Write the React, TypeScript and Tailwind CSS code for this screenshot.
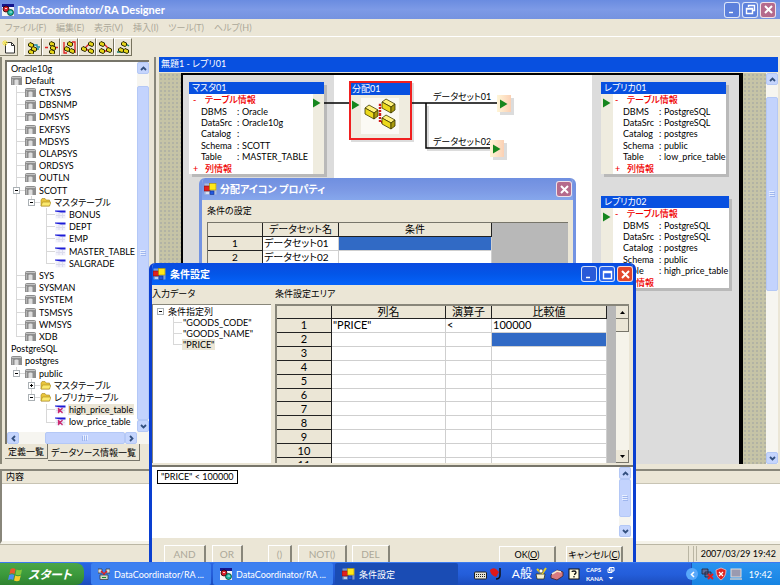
import React from 'react';
import clsx from 'clsx';

type IconName = 'db' | 'folder' | 'table' | 'replica';

interface TreeItem {
  level: number;
  label: string;
  icon?: IconName;
  // one entry per indent column: '|' line, ' ' blank, 'T' branch, 'L' last branch
  guides?: string;
  expander?: '+' | '-';
  selected?: boolean;
}

const treeItems: TreeItem[] = [
  { level: 0, label: 'Oracle10g' },
  { level: 1, label: 'Default', icon: 'db' },
  { level: 2, label: 'CTXSYS', icon: 'db', guides: 'T' },
  { level: 2, label: 'DBSNMP', icon: 'db', guides: 'T' },
  { level: 2, label: 'DMSYS', icon: 'db', guides: 'T' },
  { level: 2, label: 'EXFSYS', icon: 'db', guides: 'T' },
  { level: 2, label: 'MDSYS', icon: 'db', guides: 'T' },
  { level: 2, label: 'OLAPSYS', icon: 'db', guides: 'T' },
  { level: 2, label: 'ORDSYS', icon: 'db', guides: 'T' },
  { level: 2, label: 'OUTLN', icon: 'db', guides: 'T' },
  { level: 2, label: 'SCOTT', icon: 'db', guides: 'T', expander: '-' },
  { level: 3, label: 'マスタテーブル', icon: 'folder', guides: '|L', expander: '-' },
  { level: 4, label: 'BONUS', icon: 'table', guides: '| T' },
  { level: 4, label: 'DEPT', icon: 'table', guides: '| T' },
  { level: 4, label: 'EMP', icon: 'table', guides: '| T' },
  { level: 4, label: 'MASTER_TABLE', icon: 'table', guides: '| T' },
  { level: 4, label: 'SALGRADE', icon: 'table', guides: '| L' },
  { level: 2, label: 'SYS', icon: 'db', guides: 'T' },
  { level: 2, label: 'SYSMAN', icon: 'db', guides: 'T' },
  { level: 2, label: 'SYSTEM', icon: 'db', guides: 'T' },
  { level: 2, label: 'TSMSYS', icon: 'db', guides: 'T' },
  { level: 2, label: 'WMSYS', icon: 'db', guides: 'T' },
  { level: 2, label: 'XDB', icon: 'db', guides: 'L' },
  { level: 0, label: 'PostgreSQL' },
  { level: 1, label: 'postgres', icon: 'db' },
  { level: 2, label: 'public', icon: 'db', guides: 'L', expander: '-' },
  { level: 3, label: 'マスタテーブル', icon: 'folder', guides: ' T', expander: '+' },
  { level: 3, label: 'レプリカテーブル', icon: 'folder', guides: ' L', expander: '-' },
  { level: 4, label: 'high_price_table', icon: 'replica', guides: '  T', selected: true },
  { level: 4, label: 'low_price_table', icon: 'replica', guides: '  L' },
];

const menus = ['ファイル(F)', '編集(E)', '表示(V)', '挿入(I)', 'ツール(T)', 'ヘルプ(H)'];

const TreeIcon: React.FC<{ name: IconName }> = ({ name }) => {
  if (name === 'db') {
    return (
      <svg width="11" height="11" viewBox="0 0 11 11" className="shrink-0">
        <path d="M0 3Q0 1 2 1H9Q11 1 11 3V10H0Z" fill="#8e8e8e" />
        <path d="M1 2.5H10" stroke="#c4c4c4" />
        <path d="M3.5 10V5.5Q3.5 4.5 5.5 4.5T7.5 5.5V10Z" fill="#dedede" />
        <path d="M1.5 4V9.5" stroke="#b5b5b5" />
      </svg>
    );
  }
  if (name === 'folder') {
    return (
      <svg width="11" height="11" viewBox="0 0 11 11" className="shrink-0">
        <path d="M1 3L2 1.5H5L6 3H9.500V9H1Z" fill="#e9c53a" stroke="#a8871c" strokeWidth=".6" />
        <path d="M1 9L2.500 5H11L9.500 9Z" fill="#fbe96e" stroke="#a8871c" strokeWidth=".6" />
      </svg>
    );
  }
  return (
    <svg width="11" height="11" viewBox="0 0 11 11" className="shrink-0">
      <path d="M.5 2H10.500V9.500H.5Z" fill="#f0f0fa" />
      <path d="M4 4V9M7.500 4V9M1 6.500H10" stroke="#dcdcec" />
      <path d="M0 1.500H10.500V3.500H6L0 2.500Z" fill="#1c1cd8" />
      {name === 'replica' && <path d="M3 4L7.500 9M7.500 4L3 9M3.500 4V9" stroke="#cc2a70" strokeWidth="1.200" />}
    </svg>
  );
};

const Expander: React.FC<{ sign: '+' | '-' }> = ({ sign }) => (
  <svg width="7" height="7" viewBox="0 0 7 7" className="block bg-white">
    <rect x=".5" y=".5" width="6" height="6" fill="#fff" stroke="#aab0b4" />
    <path d={sign === '+' ? 'M2 3.5H5M3.5 2V5' : 'M2 3.5H5'} stroke="#000" />
  </svg>
);

const Guide: React.FC<{ kind: string; sign?: '+' | '-'; last: boolean }> = ({ kind, sign, last }) => (
  <span className={clsx('relative flex shrink-0 flex-col self-stretch', last ? 'w-[9px]' : 'w-[15px]')}>
    <span
      className={clsx('flex-1 border-[#d8d8d8]', kind !== ' ' && 'border-l', (kind === 'T' || kind === 'L') && 'border-b')}
    />
    <span className={clsx('flex-1 border-[#d8d8d8]', (kind === 'T' || kind === '|') && 'border-l')} />
    {sign && (
      <span className="absolute -left-[3px] top-[3px]">
        <Expander sign={sign} />
      </span>
    )}
  </span>
);

const TreeRow: React.FC<{ item: TreeItem }> = ({ item }) => {
  const guides = (item.guides ?? '').split('');
  return (
    <li className={clsx('flex flex-1 items-center', item.guides ? 'pl-[9px]' : 'pl-1')}>
      {guides.map((kind, i) => (
        <Guide
          key={i}
          kind={kind}
          last={i === guides.length - 1}
          sign={i === guides.length - 1 ? item.expander : undefined}
        />
      ))}
      {item.icon && <TreeIcon name={item.icon} />}
      <span className={clsx('whitespace-nowrap leading-[11px]', item.icon && 'ml-[2px] px-px', item.selected && 'bg-[#ebe6d6]')}>
        {item.label}
      </span>
    </li>
  );
};

const Chevron: React.FC<{ d: string }> = ({ d }) => (
  <svg width="7" height="7" viewBox="0 0 7 7">
    <path d={d} fill="none" stroke="#33507f" strokeWidth="1.800" />
  </svg>
);

const scrollButton =
  'flex h-3 w-3 shrink-0 items-center justify-center rounded-[2px] border border-[#b4c8f6] bg-[#c5d5fd]';

const ScrollBar: React.FC<{ className?: string; children: React.ReactNode }> = ({ className, children }) => (
  <div className={clsx('flex w-3 shrink-0 flex-col bg-[#f6f5f0]', className)}>
    <button aria-label="Scroll up" className={scrollButton}>
      <Chevron d="M1 5L3.500 2.500L6 5" />
    </button>
    {children}
    <button aria-label="Scroll down" className={scrollButton}>
      <Chevron d="M1 2L3.500 4.500L6 2" />
    </button>
  </div>
);

const Thumb: React.FC<{ className: string; sideways?: boolean }> = ({ className, sideways }) => (
  <div
    className={clsx(
      'flex items-center justify-center rounded-[2px] border border-[#b4c8f6] bg-[#c3d3fd]',
      className,
    )}
  >
    <svg width="6" height="6" viewBox="0 0 6 6" className={sideways ? 'rotate-90' : ''}>
      <path d="M0 .5H5M0 2.500H5M0 4.500H5" stroke="#e8efff" />
      <path d="M1 1.500H6M1 3.500H6M1 5.500H6" stroke="#9fb6ee" />
    </svg>
  </div>
);

const AppIcon: React.FC = () => (
  <svg width="12" height="12" viewBox="0 0 12 12" className="shrink-0">
    <rect width="12" height="12" fill="#f4f4f4" />
    <rect width="12" height="3" fill="#14148c" />
    <circle cx="4" cy="5" r="3" fill="#d8202c" stroke="#200" strokeWidth=".8" />
    <circle cx="8.500" cy="8.500" r="3" fill="#19b8a0" stroke="#032" strokeWidth=".8" />
    <path d="M3 4.500H5M7.500 8H10" stroke="#fff" strokeWidth=".8" />
  </svg>
);

const FormIcon: React.FC = () => (
  <svg width="13" height="12" viewBox="0 0 13 12" className="shrink-0">
    <rect x=".5" y=".5" width="12" height="11" fill="#e8e4d6" opacity=".5" />
    <rect x="0" y="3" width="6" height="5" fill="#e02020" stroke="#801010" strokeWidth=".6" />
    <rect x="5.500" y=".5" width="6.500" height="6.500" fill="#ffe818" stroke="#a58c00" strokeWidth=".6" />
    <rect x="6" y="8" width="4" height="3.500" fill="#2058e0" stroke="#10308c" strokeWidth=".6" />
    <path d="M2 10H5" stroke="#fff" />
  </svg>
);

type WindowButtonKind = 'min' | 'max' | 'restore' | 'close';

const glyphs: Record<WindowButtonKind, string> = {
  min: 'M3 9.500H7',
  max: 'M2.500 3.500H10.500V10.500H2.500ZM2.500 4.500H10.500',
  restore: 'M4.500 4V2.500H10.500V7.500H9M2.500 5.500H8.500V10.500H2.500ZM2.500 6H8.500',
  close: 'M3 3L10 10M10 3L3 10',
};

const WindowButton: React.FC<{ kind: WindowButtonKind; className: string }> = ({ kind, className }) => (
  <button
    aria-label={kind}
    className={clsx('flex items-center justify-center rounded-[3px] border border-white/80', className)}
  >
    <svg width="13" height="13" viewBox="0 0 13 13">
      <path d={glyphs[kind]} fill="none" stroke="#fff" strokeWidth={kind === 'close' ? 2 : 1.4} />
    </svg>
  </button>
);

// yellow boxes joined by coloured links; each tool joins them differently
const toolGlyphs = [
  { boxes: [[1, 1], [1, 8], [4, 5]], link: 'M6 4H10V6H13M8 8H12', tint: '#1a8ca0' },
  { boxes: [[4, 0], [5, 4], [4, 8]], link: 'M0 6.500H3M10 6.500H13', tint: '#e02020' },
  { boxes: [[4, 0], [1, 5], [6, 7]], link: 'M1 1V12H4M9 1H12V12', tint: '#e02020' },
  { boxes: [[0, 5], [7, 0], [7, 7]], link: 'M4 7L8 3M4 7L8 10', tint: '#e02020' },
  { boxes: [[0, 0], [0, 7], [7, 6]], link: 'M5 3L9 7M5 10H9', tint: '#e02020' },
  { boxes: [[4, 0], [1, 6], [6, 7]], link: 'M0 11H12M9 3L12 5', tint: '#14806c' },
];

const Toolbar: React.FC = () => (
  <div className="flex h-[21px] items-center border-t border-white bg-[#ebe6d6]">
    <button aria-label="New" className="flex h-[18px] w-[18px] items-center justify-center border-b border-r border-[#8a8672]">
      <svg width="14" height="14" viewBox="0 0 14 14">
        <path d="M3.500 2.500H9.500L12.500 5.500V13H3.500Z" fill="#fff" stroke="#333" />
        <path d="M9.500 2.500V5.500H12.500" fill="none" stroke="#333" />
        <path d="M3 0V6M0 3H6M1 1L5 5M5 1L1 5" stroke="#f3e24a" />
      </svg>
    </button>
    <div className="ml-[6px] flex">
      {toolGlyphs.map((tool, i) => (
        <button
          key={i}
          aria-label={`Tool ${i + 1}`}
          className="flex h-[18px] w-[18px] items-center justify-center border border-b-[#77735f] border-l-white border-r-[#77735f] border-t-white"
        >
          <svg width="13" height="13" viewBox="0 0 13 13">
            <path d={tool.link} fill="none" stroke={tool.tint} strokeWidth="1.300" />
            {tool.boxes.map(([x, y]) => (
              <path
                key={`${x}-${y}`}
                transform={`translate(${x} ${y})`}
                d="M.5 2L2 .5L5.500 2V4.500L4 5.500L.5 4Z"
                fill="#e6d619"
                stroke="#2a2700"
              />
            ))}
          </svg>
        </button>
      ))}
    </div>
  </div>
);

const PlayMark: React.FC = () => (
  <svg width="8" height="10" viewBox="0 0 8 10" className="shrink-0">
    <path d="M0 .5L7.500 5L0 9.500Z" fill="#16861d" />
  </svg>
);

interface TableCardProps {
  title: string;
  rows: [string, string][];
  port: 'left' | 'right';
  className: string;
}

const TableCard: React.FC<TableCardProps> = ({ title, rows, port, className }) => {
  const strip = (
    <div className={clsx('shrink-0 bg-[#efecdf] pt-[4px]', port === 'left' ? 'w-3 pl-[2px]' : 'w-[11px]')}>
      <PlayMark />
    </div>
  );
  return (
    <section className={clsx('flex h-[92px] flex-col bg-white shadow-[3px_3px_0_#b9b9b9]', className)}>
      <h2 className="h-3 bg-[#0850e0] pl-[3px] leading-3 text-white">{title}</h2>
      <div className="flex min-h-0 flex-1">
        {port === 'left' && strip}
        <div className={clsx('flex flex-1 flex-col whitespace-nowrap leading-[11px]', port === 'left' ? 'pl-[2px]' : 'pl-1')}>
          <div className="flex flex-1 items-center font-medium text-[#f00000]">
            <span className="w-3">-</span>テーブル情報
          </div>
          {rows.map(([name, value]) => (
            <div key={name} className="flex flex-1 items-center pl-2">
              <span className="w-[36px]">{name}</span>
              <span className="w-[5px]">:</span>
              {value}
            </div>
          ))}
          <div className="flex flex-1 items-center font-medium text-[#f00000]">
            <span className="w-3">+</span>列情報
          </div>
        </div>
        {port === 'right' && strip}
      </div>
    </section>
  );
};

const YellowBox: React.FC<{ x: number; y: number }> = ({ x, y }) => (
  <g transform={`translate(${x} ${y})`} stroke="#3c3800" strokeWidth=".8">
    <path d="M0 3L4 0L13 5L9 8Z" fill="#fff27a" />
    <path d="M0 3L9 8V14L0 9Z" fill="#ecd91c" />
    <path d="M9 8L13 5V11L9 14Z" fill="#a89a0c" />
  </g>
);

const replicaRows = (table: string): [string, string][] => [
  ['DBMS', 'PostgreSQL'],
  ['DataSrc', 'PostgreSQL'],
  ['Catalog', 'postgres'],
  ['Schema', 'public'],
  ['Table', table],
];

const OutputPort: React.FC<{ className: string }> = ({ className }) => (
  <div className={clsx('absolute flex h-[17px] w-[14px] items-center bg-gradient-to-r from-[#fff6d8] to-[#fbd0b4] pl-[3px] shadow-[3px_3px_0_#dcdcdc]', className)}>
    <PlayMark />
  </div>
);

const Canvas: React.FC = () => (
  <div className="relative ml-[22px] mr-[23px] flex flex-1 border-l-2 border-r-4 border-t-2 border-black bg-white">
    <div className="w-[151px] bg-[#dcdcdc] pl-[6px] pt-[7px]">
      <TableCard
        title="マスタ01"
        port="right"
        className="w-[135px]"
        rows={[
          ['DBMS', 'Oracle'],
          ['DataSrc', 'Oracle10g'],
          ['Catalog', ''],
          ['Schema', 'SCOTT'],
          ['Table', 'MASTER_TABLE'],
        ]}
      />
    </div>
    <div className="flex-1 pl-[15px] pt-[6px]">
      <section className="flex h-[59px] w-[63px] flex-col border-2 border-[#f02020] bg-[#efecdf] shadow-[2px_2px_0_#dcdcdc]">
        <h2 className="h-3 bg-[#0850e0] pl-px leading-3 text-white">分配01</h2>
        <div className="flex flex-1 pt-[3px]">
          <div className="pl-px pt-[2px]">
            <PlayMark />
          </div>
          <svg width="38" height="36" viewBox="0 0 38 36" className="ml-px bg-[#fbfaf4]">
            <path d="M15 16H19V7H24M19 16V24H24" fill="none" stroke="#d01818" strokeWidth="2.400" strokeDasharray="2 1" />
            <YellowBox x={4} y={7} />
            <YellowBox x={21} y={1} />
            <YellowBox x={21} y={17} />
          </svg>
        </div>
      </section>
    </div>
    <div className="flex w-[147px] flex-col gap-[22px] bg-[#dcdcdc] pl-[9px] pt-[7px]">
      <TableCard title="レプリカ01" port="left" className="w-[125px]" rows={replicaRows('low_price_table')} />
      <TableCard title="レプリカ02" port="left" className="w-[128px]" rows={replicaRows('high_price_table')} />
    </div>
    <svg className="pointer-events-none absolute left-0 top-0" width="330" height="90" viewBox="0 0 330 90">
      <path d="M245 31V75H310" fill="none" stroke="#dcdcdc" strokeWidth="2" />
      <path d="M141 28H166M229 28H315M243 28V73H307" fill="none" stroke="#000" strokeWidth="1.500" />
    </svg>
    <span className="absolute left-[250px] top-[16px] leading-3">データセット01</span>
    <span className="absolute left-[250px] top-[61px] leading-3">データセット02</span>
    <OutputPort className="left-[314px] top-[20px]" />
    <OutputPort className="left-[307px] top-[65px]" />
  </div>
);

const Explorer: React.FC = () => (
  <aside className="flex w-[150px] shrink-0 flex-col border-l-2 border-[#8a8878] bg-[#ebe6d6] pl-[3px] pr-px pt-[3px]">
    <div className="flex min-h-0 flex-1 flex-col border-l-2 border-t-2 border-[#77756a] bg-white">
      <div className="flex min-h-0 flex-1">
        <ul className="flex h-[366px] min-w-0 flex-1 flex-col overflow-hidden">
          {treeItems.map((item, i) => (
            <TreeRow key={i} item={item} />
          ))}
        </ul>
        <ScrollBar>
          <Thumb className="mt-3 flex-1" />
        </ScrollBar>
      </div>
      <div className="flex h-3 bg-[#f6f5f0] pr-3">
        <button aria-label="Scroll left" className={scrollButton}>
          <Chevron d="M5 1L2.500 3.500L5 6" />
        </button>
        <Thumb className="ml-[26px] flex-1" sideways />
        <button aria-label="Scroll right" className={scrollButton}>
          <Chevron d="M2 1L4.500 3.500L2 6" />
        </button>
      </div>
    </div>
    <div className="flex h-[20px] items-start whitespace-nowrap">
      <button className="h-[15px] border-b border-r border-[#77756a] px-[3px]">定義一覧</button>
      <button className="h-[17px] border-b border-r border-[#77756a] px-[3px]">データソース情報一覧</button>
    </div>
  </aside>
);

const headCell = 'border-b border-r border-[#222] bg-[#ebe6d6] p-0 text-center font-normal';
const bodyCell = 'border-b border-r border-[#cfcfcf] p-0 pl-px';

const PropertyDialog: React.FC = () => (
  <section className="absolute bottom-0 left-[199px] top-[178px] flex w-[377px] flex-col overflow-hidden rounded-t-[6px] border-x-[3px] border-[#7393e2] bg-[#ebe6d6]">
    <header className="flex h-[22px] shrink-0 items-center bg-gradient-to-b from-[#6f8fe0] via-[#7b98e4] to-[#86a7ec] pl-[2px] pr-px text-[10px] font-bold text-white">
      <FormIcon />
      <h2 className="ml-[3px] flex-1">分配アイコン プロパティ</h2>
      <WindowButton kind="close" className="h-4 w-4 bg-[#b56a8c]" />
    </header>
    <div className="px-[5px] pt-1">
      <p className="h-[18px]">条件の設定</p>
      <div className="flex border-l border-t border-[#77756a] bg-[#b8b8b8]">
        <table className="w-[284px] table-fixed border-separate border-spacing-0 bg-white text-[10px] leading-[13px]">
          <thead>
            <tr>
              <th className={clsx(headCell, 'w-[55px]')} />
              <th className={clsx(headCell, 'w-[76px]')}>データセット名</th>
              <th className={headCell}>条件</th>
            </tr>
          </thead>
          <tbody>
            {['データセット01', 'データセット02'].map((name, i) => (
              <tr key={name}>
                <th className={headCell}>{i + 1}</th>
                <td className={bodyCell}>{name}</td>
                <td className={clsx(bodyCell, i === 0 && 'bg-[#316ac5]')} />
              </tr>
            ))}
          </tbody>
        </table>
      </div>
    </div>
  </section>
);

const conditionRows = Array.from({ length: 11 }, (_, i) => (i === 0 ? ['"PRICE"', '<', '100000'] : ['', '', '']));

const ConditionTable: React.FC = () => (
  <div className="flex min-h-0 flex-1 overflow-hidden border-l-2 border-t-2 border-[#88867a] bg-[#b8b8b8]">
    <table className="h-[166px] w-[330px] table-fixed border-separate border-spacing-0 bg-white text-[11px] leading-[12px]">
      <thead>
        <tr>
          <th className={clsx(headCell, 'w-[55px]')} />
          <th className={headCell}>列名</th>
          <th className={clsx(headCell, 'w-[46px]')}>演算子</th>
          <th className={clsx(headCell, 'w-[115px]')}>比較値</th>
        </tr>
      </thead>
      <tbody>
        {conditionRows.map((cells, row) => (
          <tr key={row}>
            <th className={headCell}>{row + 1}</th>
            {cells.map((cell, col) => (
              <td key={col} className={clsx(bodyCell, row === 1 && col === 2 && 'bg-[#316ac5]')}>
                {cell}
              </td>
            ))}
          </tr>
        ))}
      </tbody>
    </table>
    <div className="ml-auto flex w-[13px] flex-col justify-between bg-[#f5f3ea]">
      <div>
        <button aria-label="Row up" className="flex h-[13px] w-[13px] items-center justify-center border-b border-r border-[#77756a] bg-[#ebe6d6]">
          <svg width="5" height="3" viewBox="0 0 5 3"><path d="M0 3L2.500 0L5 3Z" /></svg>
        </button>
        <div className="h-[13px] border-b border-r border-[#77756a] bg-[#ebe6d6]" />
      </div>
      <button aria-label="Row down" className="flex h-[13px] w-[13px] items-center justify-center border-b border-r border-[#77756a] bg-[#ebe6d6]">
        <svg width="5" height="3" viewBox="0 0 5 3"><path d="M0 0L2.500 3L5 0Z" /></svg>
      </button>
    </div>
  </div>
);

const dialogButton = 'border-l border-r-2 border-t border-l-white border-r-[#88867a] border-t-white text-center whitespace-nowrap';

const ConditionDialog: React.FC = () => (
  <section className="absolute bottom-0 left-[149px] top-[263px] flex w-[487px] flex-col overflow-hidden rounded-t-[6px] border-x-[3px] border-[#0a3fd0] bg-[#ebe6d6]">
    <header className="flex h-[22px] shrink-0 items-center gap-px bg-gradient-to-b from-[#0a4be0] via-[#0356e8] to-[#0563fa] pl-[1px] text-[10px] font-bold text-white">
      <FormIcon />
      <h2 className="ml-[3px] flex-1">条件設定</h2>
      <WindowButton kind="min" className="h-4 w-4 border-white/30 bg-[#2a5ad8]" />
      <WindowButton kind="max" className="ml-px h-4 w-4 bg-[#2a62e8]" />
      <WindowButton kind="close" className="ml-px h-4 w-4 bg-[#e2462c]" />
    </header>
    <div className="flex h-[178px] shrink-0 gap-1">
      <div className="flex w-[119px] flex-col">
        <p className="h-[19px] leading-[18px]">入力データ</p>
        <div className="flex-1 border-l border-t border-[#88867a] bg-white pl-1 pt-px">
          <div className="flex h-[11px] items-center gap-1 whitespace-nowrap">
            <Expander sign="-" />
            条件指定列
          </div>
          <ul className="ml-[16px]">
            {['"GOODS_CODE"', '"GOODS_NAME"', '"PRICE"'].map((name, i) => (
              <li key={name} className="flex h-[11px] items-center whitespace-nowrap">
                <Guide kind={i === 2 ? 'L' : 'T'} last />
                <span className={clsx('px-px leading-[11px]', i === 2 && 'bg-[#ebe6d6]')}>{name}</span>
              </li>
            ))}
          </ul>
        </div>
      </div>
      <div className="flex min-w-0 flex-1 flex-col pr-1">
        <p className="h-[19px] leading-[18px]">条件設定エリア</p>
        <ConditionTable />
      </div>
    </div>
    <div className="mt-[2px] flex h-[73px] shrink-0 border-b border-t-2 border-b-white border-t-[#77756a] bg-white">
      <div className="flex-1 pl-[5px] pt-[3px]">
        <span className="inline-block border border-black px-[3px] leading-3">"PRICE" &lt; 100000</span>
      </div>
      <ScrollBar className="mr-[2px]">
        <Thumb className="h-[38px]" />
        <div className="flex-1" />
      </ScrollBar>
    </div>
    <div className="flex min-h-0 flex-1 items-end pl-3 pr-[10px] text-[10px] leading-4">
      <div className="flex text-[#aca899]">
        <button className={clsx(dialogButton, 'w-[42px]')}>AND</button>
        <button className={clsx(dialogButton, 'ml-[6px] w-[31px]')}>OR</button>
        <button className={clsx(dialogButton, 'ml-[25px] w-[24px]')}>()</button>
        <button className={clsx(dialogButton, 'ml-[6px] w-[49px]')}>NOT()</button>
        <button className={clsx(dialogButton, 'ml-[5px] w-[38px]')}>DEL</button>
      </div>
      <div className="ml-auto flex gap-[10px] text-[9px] leading-[15px]">
        <button className={clsx(dialogButton, 'w-[57px]')}>OK(<u>O</u>)</button>
        <button className={clsx(dialogButton, 'w-[57px]')}>キャンセル(<u>C</u>)</button>
      </div>
    </div>
  </section>
);

const taskButton = 'flex h-full items-center gap-1 overflow-hidden whitespace-nowrap rounded-[2px] px-[7px] text-white';

const Taskbar: React.FC = () => (
  <footer className="flex h-[23px] shrink-0 items-center border-t border-[#3a7af0] bg-gradient-to-b from-[#2a66e2] via-[#245edb] to-[#1c4dbd]">
    <button className="flex h-full w-[84px] items-center gap-[5px] rounded-r-[8px] bg-gradient-to-b from-[#4ba548] via-[#3c9a3c] to-[#2f8330] pl-2 text-[12px] font-bold italic text-white">
      <svg width="15" height="15" viewBox="0 0 15 15">
        <path d="M2.500 2Q5 .5 7.500 2L6.500 7Q4 5.500 1.500 7Z" fill="#e8582c" />
        <path d="M8.500 2.500Q11 4 14 2.500L13 7.500Q10 9 7.500 7.500Z" fill="#84c83c" />
        <path d="M1.200 8Q4 6.500 6.200 8L5.200 13Q3 11.500 0 13Z" fill="#4a8cf0" />
        <path d="M7.200 8.500Q10 10 12.800 8.500L11.500 13.500Q9 15 6 13.500Z" fill="#f6cc2c" />
      </svg>
      スタート
    </button>
    <div className="ml-[7px] flex h-full min-w-0 gap-[2px]">
      <button className={clsx(taskButton, 'w-[120px] bg-[#3c80f0]')}>
        <svg width="12" height="12" viewBox="0 0 12 12" className="shrink-0">
          <path d="M0 1H4V5H0ZM8 1H12V5H8Z" fill="#ddd" stroke="#333" strokeWidth=".7" />
          <path d="M3 3L6 6L9 3M6 6V8" stroke="#e02020" strokeWidth="1.500" fill="none" />
          <path d="M2 7H10V11.500H2Z" fill="#cfd8c8" stroke="#333" strokeWidth=".7" />
          <path d="M4 9.500H8" stroke="#18902c" />
        </svg>
        DataCoordinator/RA ...
      </button>
      <button className={clsx(taskButton, 'w-[120px] bg-[#3c80f0]')}>
        <AppIcon />
        DataCoordinator/RA ...
      </button>
      <button className={clsx(taskButton, 'w-[123px] bg-[#1a4cb4]')}>
        <FormIcon />
        条件設定
      </button>
    </div>
    <div className="ml-auto flex items-center text-white">
      <svg width="30" height="14" viewBox="0 0 30 14">
        <rect x=".5" y="5" width="12" height="7" rx="1" fill="#e8e4d6" stroke="#222" />
        <path d="M2 7.500H11M2 9.500H11" stroke="#222" strokeDasharray="1 1" />
        <path d="M16 3Q19 0 22 2L25 5L22 10Q16 8 16 3Z" fill="#e01818" />
        <path d="M26 1V8Q26 12 22 12" fill="none" stroke="#111" strokeWidth="1.500" />
      </svg>
      <span className="ml-2 text-[12px] leading-4">A般</span>
      <svg width="46" height="14" viewBox="0 0 46 14" className="ml-[3px]">
        <path d="M1 7H10L9 12H2Z" fill="#f4efcf" stroke="#332" strokeWidth=".8" />
        <path d="M2 2L6 6M11 1L7 7" stroke="#e8d020" strokeWidth="2" />
        <circle cx="6" cy="4" r="2" fill="#fff" stroke="#333" strokeWidth=".6" />
        <path d="M16 8L22 3L28 5V9L22 13L16 11Z" fill="#d87a80" stroke="#422" strokeWidth=".8" />
        <path d="M17 7L22 4L26 5" fill="none" stroke="#f4e8d0" strokeWidth="1.500" />
        <rect x="34" y="2" width="10" height="10" fill="#fffbe0" stroke="#111" />
        <path d="M37 5Q37 4 39 4T41 5.500Q41 7 39 7.500M39 9V10.500" fill="none" stroke="#111" strokeWidth="1.300" />
      </svg>
      <div className="ml-[5px] text-[6px] font-bold leading-[9px]">
        <div>CAPS</div>
        <div>KANA</div>
      </div>
      <svg width="8" height="16" viewBox="0 0 8 16" className="ml-1">
        <path d="M2.500 1.500H7V5H2.500ZM1 3H5V6.500H1Z" fill="#245edb" stroke="#fff" />
        <path d="M1.500 11H6.500L4 13.500Z" fill="#fff" />
      </svg>
    </div>
    <div className="ml-[76px] flex h-[22px] w-[89px] items-center gap-[2px] border-l border-[#1c52b8] bg-gradient-to-b from-[#2a94f0] to-[#1784e2] pr-2 text-[9px] text-white">
      <button aria-label="Show hidden icons" className="-ml-[6px] flex h-3 w-3 items-center justify-center rounded-full bg-[#58a8fa]">
        <svg width="7" height="7" viewBox="0 0 7 7"><path d="M5 1L2.500 3.500L5 6" fill="none" stroke="#fff" strokeWidth="1.500" /></svg>
      </button>
      <svg width="42" height="14" viewBox="0 0 42 14" className="ml-px">
        <path d="M1 2H7V7H1ZM4 5H10V10H4Z" fill="#5c6c9c" stroke="#223" strokeWidth=".8" />
        <path d="M7 7L12 12M12 7L7 12" stroke="#e81c1c" strokeWidth="1.800" />
        <path d="M15 3L20 1L25 3Q25 10 20 13Q15 10 15 3Z" fill="#e02424" stroke="#fcc" strokeWidth=".7" />
        <path d="M18 5L22 9M22 5L18 9" stroke="#fff" strokeWidth="1.200" />
        <rect x="30" y="2" width="10" height="8" fill="#9a9ab0" stroke="#ddd" />
        <path d="M29 12H41" stroke="#ccc" strokeWidth="1.500" />
      </svg>
      <time className="ml-auto">19:42</time>
    </div>
  </footer>
);

const App: React.FC = () => (
  <div className="flex h-screen flex-col overflow-hidden bg-[#ebe6d6] font-['Lato','Noto_Sans_CJK_JP',sans-serif] text-[9px] leading-[13px] text-black [font-feature-settings:'palt']">
    <div className="relative flex min-h-0 flex-1 flex-col">
      <header className="flex h-[19px] shrink-0 items-center gap-[2px] bg-gradient-to-b from-[#6a8ce0] via-[#7d9ae6] to-[#7593e0] pl-[2px] pr-1 text-[11px] font-bold text-white">
        <AppIcon />
        <h1 className="ml-px flex-1">DataCoordinator/RA Designer</h1>
        <WindowButton kind="min" className="h-4 w-4 bg-[#5c80dc]" />
        <WindowButton kind="restore" className="h-4 w-4 bg-[#5c80dc]" />
        <WindowButton kind="close" className="h-4 w-4 bg-[#b56a8c]" />
      </header>
      <nav className="flex h-[17px] shrink-0 items-center gap-[10px] pl-[5px] text-[#aca899]">
        {menus.map((menu) => (
          <button key={menu}>{menu}</button>
        ))}
      </nav>
      <Toolbar />
      <div className="flex min-h-0 flex-1 gap-1">
        <Explorer />
        <main className="flex min-w-0 flex-1 flex-col border-l-2 border-[#88867a] pl-[3px] pr-[2px]">
          <h2 className="h-[15px] shrink-0 bg-[#0850e0] pl-[2px] leading-[14px] text-white">無題1 - レプリ01</h2>
          <div className="mt-px flex min-h-0 flex-1">
            <div className="flex flex-1 bg-[#c6c4a6] bg-[radial-gradient(#b2b3a4_1px,transparent_1px)] bg-[size:4px_4px]">
              <Canvas />
            </div>
            <ScrollBar>
              <Thumb className="mt-[12px] h-[194px]" />
              <div className="flex-1" />
            </ScrollBar>
          </div>
        </main>
      </div>
      <section className="mt-[5px] flex h-[75px] shrink-0 flex-col border-b-[3px] border-l-2 border-t-2 border-b-[#f5f3ea] border-l-[#88867a] border-t-[#88867a] bg-white">
        <h2 className="h-[13px] border-b border-[#c8c4b4] bg-[#ebe6d6] pl-1 leading-3">内容</h2>
      </section>
      <div className="flex h-[18px] shrink-0 items-center justify-end gap-[2px] border-t border-[#bab6a4]">
        <div className="h-4 w-[6px] border-x border-[#bab6a4]" />
        <time className="border-l border-[#bab6a4] px-1 leading-[15px]">2007/03/29 19:42</time>
      </div>
      <PropertyDialog />
      <ConditionDialog />
    </div>
    <Taskbar />
  </div>
);

export default App;
